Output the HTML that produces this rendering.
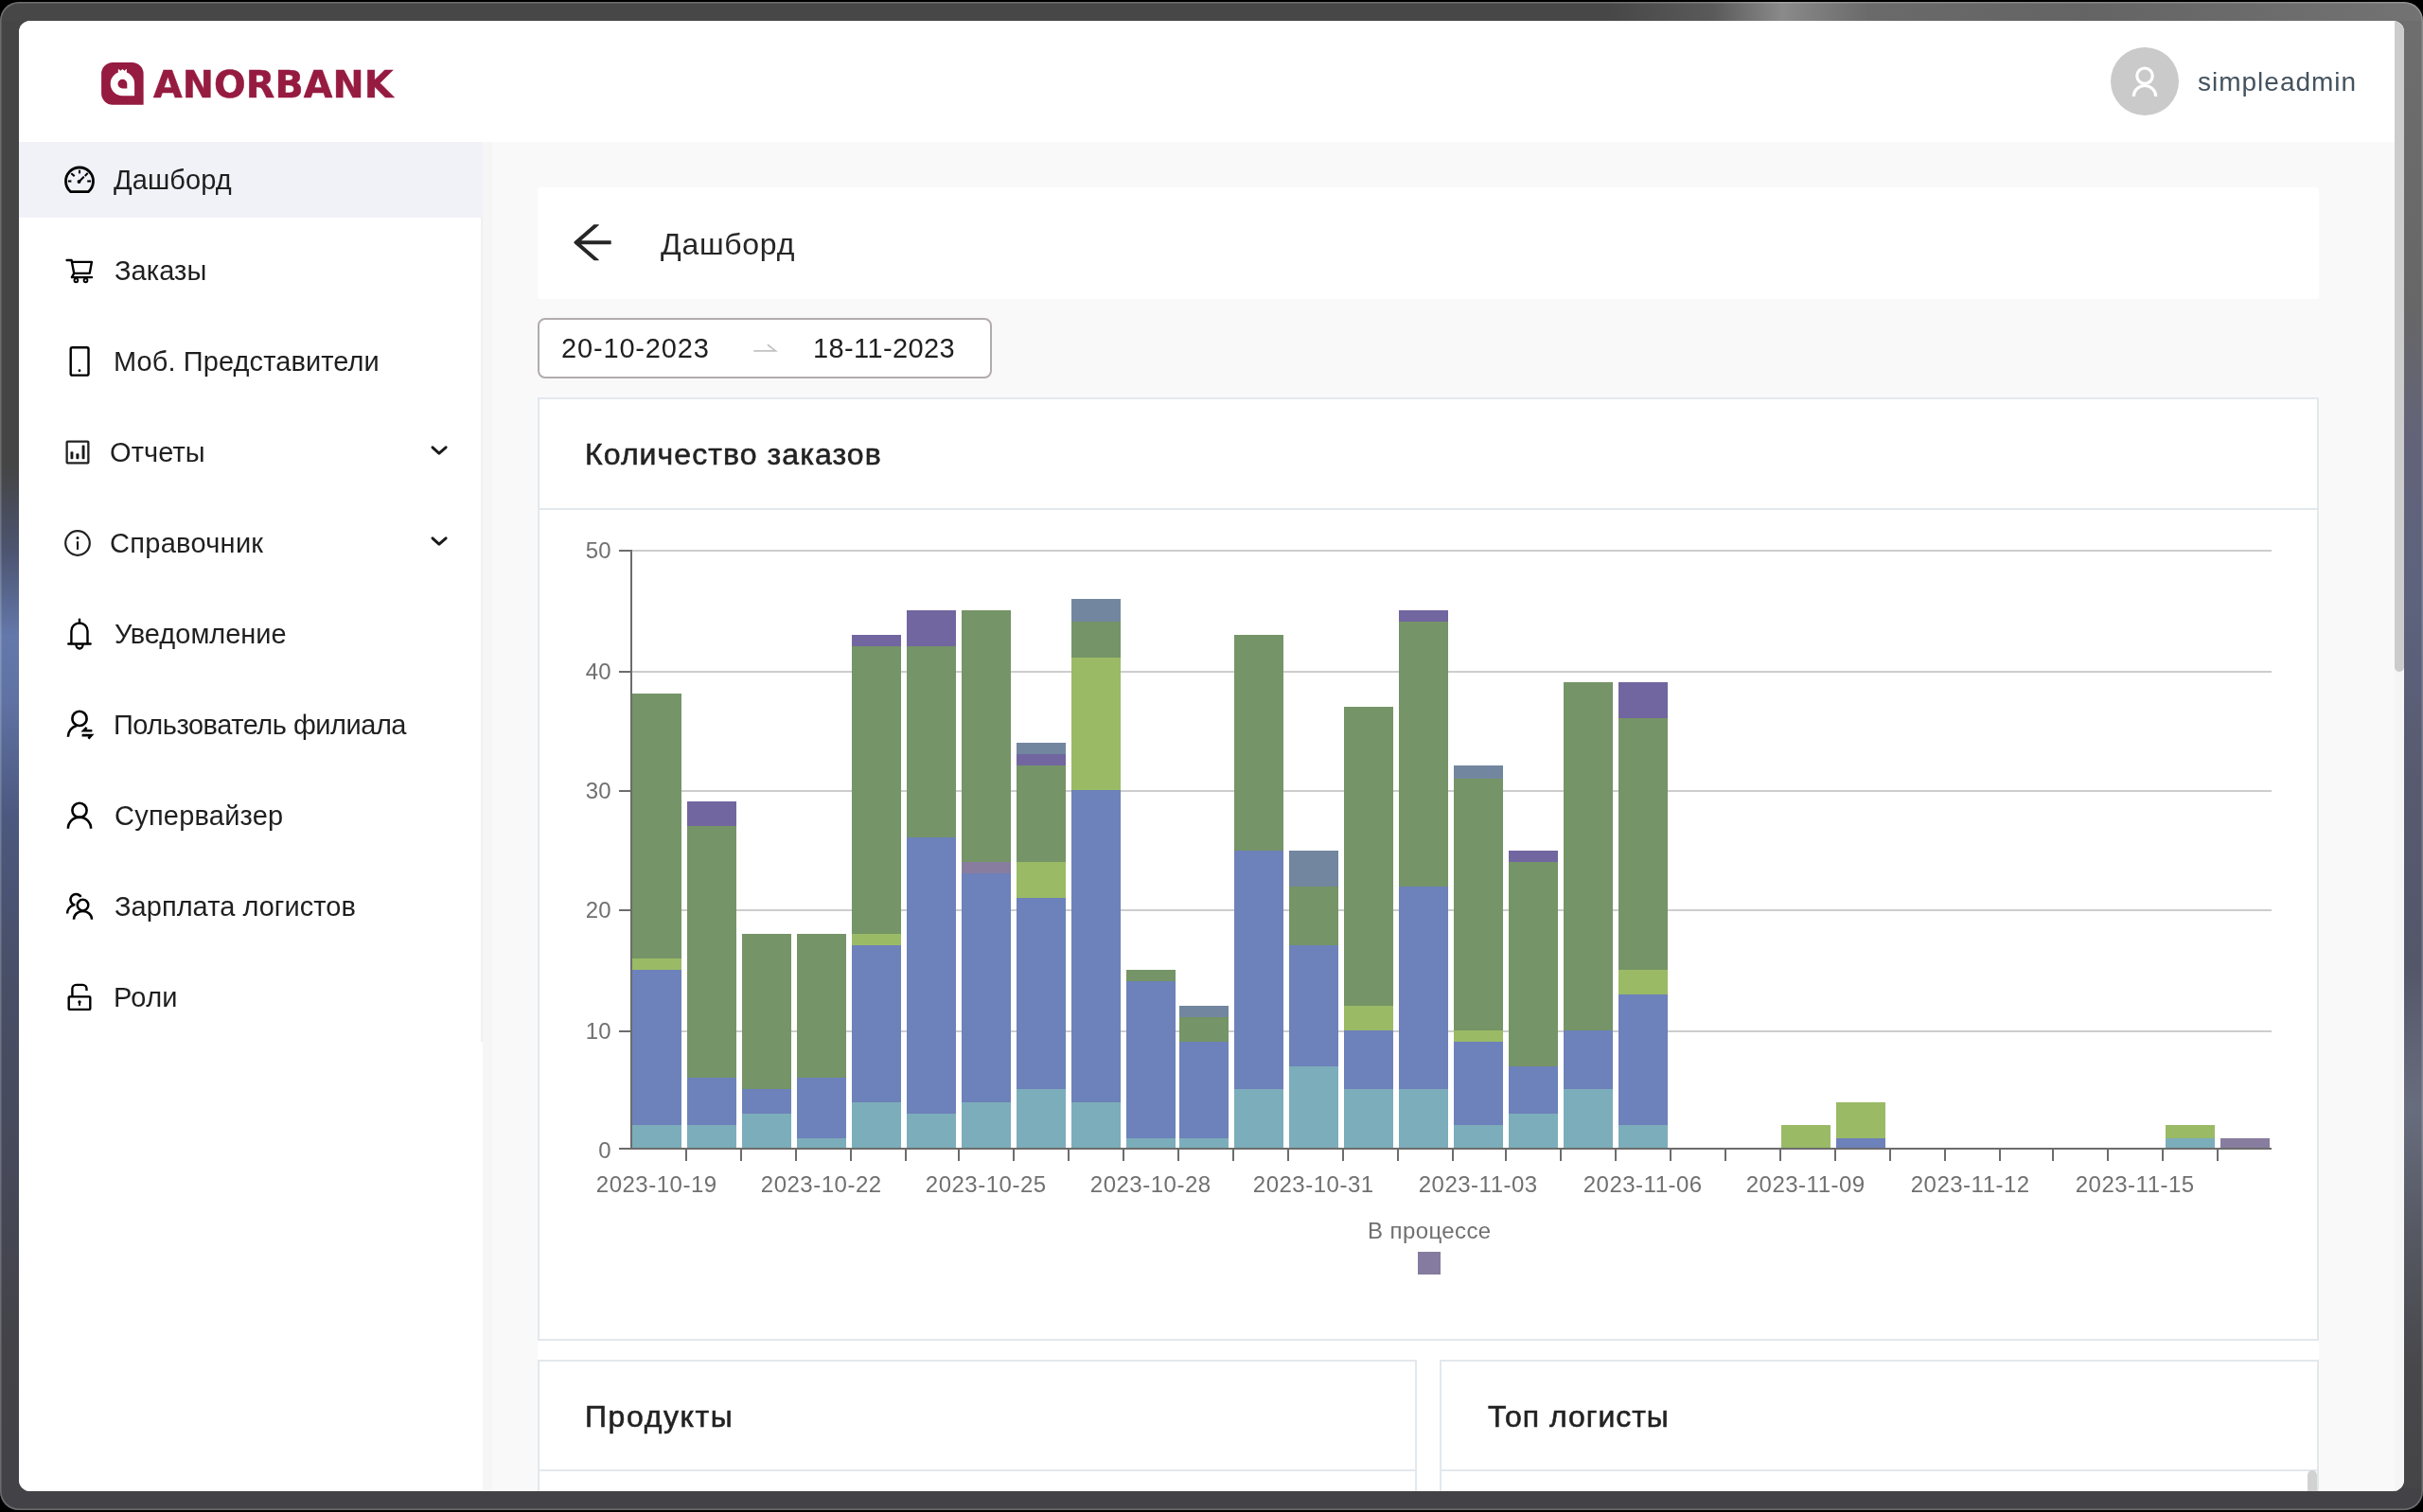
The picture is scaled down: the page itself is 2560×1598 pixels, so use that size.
<!DOCTYPE html>
<html lang="ru">
<head>
<meta charset="utf-8">
<title>Дашборд</title>
<style>
html,body{margin:0;padding:0;}
body{width:2560px;height:1598px;overflow:hidden;background:#000;position:relative;font-family:"Liberation Sans",sans-serif;}
.abs{position:absolute;}
.frame{position:absolute;left:0;top:2px;width:2560px;height:1594px;border-radius:20px;overflow:hidden;background:#454545;}
.frame .top{position:absolute;left:0;top:0;width:2560px;height:60px;background:linear-gradient(90deg,#474747 0,#474747 1700px,#5a5a5a 1810px,#8a8a8a 1883px,#6a6a6a 1975px,#646464 2200px,#6c6c6c 2400px,#737373 2560px);}
.frame .left{position:absolute;left:0;top:20px;width:40px;bottom:0;background:linear-gradient(180deg,#454545 0,#454545 470px,#4c5470 560px,#6478ab 650px,#5f72a3 720px,#4c587f 840px,#484f68 1000px,#46495a 1200px,#434348 1400px,#434347 1575px);}
.frame .right{position:absolute;right:0;top:20px;width:40px;bottom:0;background:linear-gradient(180deg,#6e6e6e 0,#676767 300px,#62637a 450px,#5d627d 620px,#585b70 800px,#54576a 1000px,#686d7e 1150px,#565963 1280px,#48484c 1420px,#444446 1575px);}
.frame .bottom{position:absolute;left:0;bottom:0;width:2560px;height:24px;background:#434347;}
.frame .edge{position:absolute;left:0;top:0;right:0;bottom:0;border-radius:20px;box-shadow:inset 0 0 0 1.5px rgba(255,255,255,.22);}
.win{position:absolute;left:20px;top:22px;width:2520px;height:1554px;border-radius:12px;overflow:hidden;background:#f9f9f9;}
.pg{position:absolute;left:-20px;top:-22px;width:2560px;height:1598px;}
.t{position:absolute;white-space:pre;will-change:transform;}
.card{position:absolute;background:#fff;border:2px solid #e3e8ed;box-sizing:border-box;}
.hl{position:absolute;height:2px;background:#e3e8ed;}
svg{position:absolute;overflow:visible;will-change:transform;}
svg text{font-family:"Liberation Sans",sans-serif;}
</style>
</head>
<body>
<div class="frame"><div class="top"></div><div class="left"></div><div class="right"></div><div class="bottom"></div><div class="edge"></div></div>
<div class="win"><div class="pg">

<!-- header -->
<div class="abs" style="left:20px;top:22px;width:2520px;height:128px;background:#fff;"></div>
<!-- sidebar -->
<div class="abs" style="left:20px;top:150px;width:490px;height:1426px;background:#fff;"></div>
<div class="abs" style="left:508px;top:150px;width:2px;height:951px;background:#f0f0f0;"></div>
<div class="abs" style="left:510px;top:150px;width:10px;height:1426px;background:#f6f6f6;border-radius:4px 4px 0 0;"></div>
<div class="abs" style="left:20px;top:150px;width:490px;height:80px;background:#f0f2f7;"></div>

<!-- main scrollbar -->
<div class="abs" style="left:2530px;top:22px;width:10px;height:1554px;background:#f5f5f5;"></div>
<div class="abs" style="left:2530px;top:22px;width:10px;height:688px;background:#cccccc;border-radius:0 0 5px 5px;"></div>

<!-- page header card -->
<div class="abs" style="left:568px;top:198px;width:1882px;height:118px;background:#fff;border-radius:4px;"></div>

<!-- date range picker -->
<div class="abs" style="left:568px;top:336px;width:480px;height:64px;box-sizing:border-box;border:2px solid #b2acac;border-radius:8px;background:#fff;"></div>

<!-- cards -->
<div class="abs" style="left:568px;top:420px;width:1882px;height:1200px;background:#fff;"></div>
<div class="card" style="left:568px;top:420px;width:1882px;height:997px;"></div>
<div class="hl" style="left:570px;top:537px;width:1878px;"></div>
<div class="card" style="left:568px;top:1437px;width:929px;height:200px;"></div>
<div class="hl" style="left:570px;top:1553px;width:925px;"></div>
<div class="card" style="left:1521px;top:1437px;width:929px;height:200px;"></div>
<div class="hl" style="left:1523px;top:1553px;width:925px;"></div>
<div class="abs" style="left:2438px;top:1554px;width:10px;height:40px;background:#d2d2d2;border-radius:5px;"></div>

<!-- ICONS -->
<svg width="2560" height="1598" viewBox="0 0 2560 1598" style="left:0;top:0;">
<!-- logo -->
<path d="M119.1,66.1H139.6A12,12 0 0 1 151.6,78.1V110.8H119.1A12,12 0 0 1 107.1,98.8V78.1A12,12 0 0 1 119.1,66.1Z" fill="#961b40"/>
<path d="M129.4,75.8A12.7,12.7 0 1 0 129.4,101.2H142.1V88.5A12.7,12.7 0 0 0 129.4,75.8Z" fill="#fff"/>
<path d="M124.9,72.7L127.4,74.8L129.4,73.1L131.4,74.8L133.8,72.8L133.9,78.5H124.8Z" fill="#fff"/>
<path d="M129.4,83.7A4.9,4.9 0 1 0 129.4,93.5H134.3V88.6A4.9,4.9 0 0 0 129.4,83.7Z" fill="#961b40"/>
<!-- avatar -->
<circle cx="2266" cy="86" r="36" fill="#cacaca"/>
<g fill="none" stroke="#fff" stroke-width="3.2">
<circle cx="2266" cy="80.2" r="8.2"/>
<path d="M2254.3,101.9A11.7,11.4 0 0 1 2277.7,101.9"/>
</g>
<!-- dashboard -->
<g fill="none" stroke="#000" stroke-width="2.8" stroke-linejoin="round">
<path d="M74.67,202.6A14.5,14.5 0 1 1 93.33,202.6Z"/>
</g>
<g fill="none" stroke="#000" stroke-width="2.1" stroke-linecap="butt">
<path d="M84,179.8V183.4"/><path d="M71.9,191.5H75.4"/><path d="M92.2,191.5H96.1"/>
<path d="M75.3,183.3L78.7,186.1"/><path d="M89.8,186.0L92.7,182.9"/>
<path d="M83.6,191.9L88.2,187.3" stroke-width="2.1" stroke-linecap="round"/>
</g>
<circle cx="83.5" cy="192" r="1.95" fill="#000"/>
<!-- cart -->
<g fill="none" stroke="#000" stroke-width="2.4" stroke-linecap="round" stroke-linejoin="round">
<path d="M70.6,275H75.6L78.2,288.9H94.7L96.9,276.9H76.2"/>
<path d="M78.2,288.9L75.9,293.1H97.1"/>
</g>
<g fill="none" stroke="#000" stroke-width="1.9"><circle cx="80.4" cy="296.3" r="1.9"/><circle cx="90.5" cy="296.3" r="1.9"/></g>
<!-- mobile -->
<rect x="74.7" y="367.3" width="18.8" height="29.3" rx="1.6" fill="none" stroke="#000" stroke-width="2.4"/>
<circle cx="84" cy="391.7" r="1.4" fill="#000"/>
<!-- reports -->
<rect x="70.65" y="466.65" width="22.7" height="22.7" rx="0.8" fill="none" stroke="#222" stroke-width="2.3"/>
<rect x="74.5" y="477.2" width="2.9" height="8.1" rx="1" fill="#1a1a1a"/>
<rect x="80.4" y="479.3" width="3" height="6" rx="1" fill="#1a1a1a"/>
<rect x="86.6" y="470.6" width="2.9" height="14.7" rx="1" fill="#1a1a1a"/>
<!-- info -->
<circle cx="82" cy="574" r="12.8" fill="none" stroke="#222" stroke-width="2.2"/>
<circle cx="82" cy="568.4" r="1.5" fill="#111"/>
<rect x="80.95" y="572.2" width="2.1" height="8.7" fill="#111"/>
<!-- bell -->
<g fill="none" stroke="#000" stroke-width="2.4" stroke-linecap="round">
<path d="M75.4,680V667A8.55,8.55 0 0 1 92.5,667V680"/>
<path d="M72.3,680.5H95.6"/>
<path d="M84,654.6V658"/>
<path d="M80.4,681.3A3.6,4.2 0 0 0 87.6,681.3" stroke-linecap="butt"/>
</g>
<!-- user switch -->
<g fill="none" stroke="#000" stroke-width="2.6">
<circle cx="84" cy="759.4" r="7.6"/>
<path d="M71.9,778.7A12.1,12.1 0 0 1 80.87,767.0"/>
<path d="M97.3,772.3H88.4L91.6,768.9" stroke-linejoin="miter"/>
<path d="M86.6,777.1H96.6L93.4,780.6" stroke-linejoin="miter"/>
</g>
<!-- user -->
<g fill="none" stroke="#000" stroke-width="2.6">
<circle cx="84" cy="856.4" r="7.6"/>
<path d="M71.9,875.7A12.1,12.1 0 0 1 96.1,875.7"/>
</g>
<!-- team -->
<g fill="none" stroke="#000" stroke-width="2.5">
<circle cx="87.5" cy="956.6" r="5.8"/>
<path d="M78,971.7A9.5,8.8 0 0 1 97,971.7"/>
<path d="M85.5,947.85A5.9,5.9 0 1 0 79.4,956.6"/>
<path d="M71.1,965.5A9.3,9.3 0 0 1 78.0,956.5"/>
</g>
<!-- unlock -->
<g fill="none" stroke="#000" stroke-width="2.4">
<rect x="72.7" y="1053.4" width="22.6" height="13.5" rx="0.8"/>
<path d="M76.4,1053V1045A4.1,4.1 0 0 1 80.5,1040.9H87.4A4.1,4.1 0 0 1 91.5,1045V1047"/>
</g>
<circle cx="84" cy="1058.9" r="1.7" fill="#000"/>
<rect x="83" y="1059" width="2" height="3.8" fill="#000"/>
<!-- chevrons -->
<g fill="none" stroke="#1a1a1a" stroke-width="3" stroke-linecap="round" stroke-linejoin="round">
<path d="M457,472.8L463.9,479.1L471.1,472.8"/>
<path d="M457,568.8L463.9,575.1L471.1,568.8"/>
</g>
<!-- back arrow -->
<g transform="translate(598.83,228.99) scale(0.05326)">
<path fill="#262626" d="M872 474H286.900l350.200-304c5.600-4.900 2.200-14-5.200-14h-88.500c-3.900 0-7.600 1.400-10.500 3.900L155 487.800a31.960 31.960 0 0 0 0 48.300L535.100 866c1.500 1.300 3.300 2 5.200 2h91.500c7.400 0 10.800-9.200 5.200-14L286.900 550H872c4.400 0 8-3.600 8-8v-60c0-4.400-3.600-8-8-8z"/>
</g>
<!-- range arrow -->
<path d="M796.3,370.8H819.4L810.9,364.3" fill="none" stroke="#c2c2c2" stroke-width="1.7" stroke-linejoin="miter"/>

</svg>

<!-- chart -->
<svg width="2560" height="1598" viewBox="0 0 2560 1598" style="left:0;top:0;" shape-rendering="crispEdges">
<rect x="668" y="1089" width="1732" height="2" fill="#cdcdcd"/>
<rect x="668" y="961" width="1732" height="2" fill="#cdcdcd"/>
<rect x="668" y="835" width="1732" height="2" fill="#cdcdcd"/>
<rect x="668" y="709" width="1732" height="2" fill="#cdcdcd"/>
<rect x="668" y="581" width="1732" height="2" fill="#cdcdcd"/>
<rect x="668" y="1189" width="52" height="24" fill="#7cadba"/>
<rect x="668" y="1025" width="52" height="164" fill="#6d81ba"/>
<rect x="668" y="1013" width="52" height="12" fill="#9aba66"/>
<rect x="668" y="733" width="52" height="280" fill="#759467"/>
<rect x="726" y="1189" width="52" height="24" fill="#7cadba"/>
<rect x="726" y="1139" width="52" height="50" fill="#6d81ba"/>
<rect x="726" y="873" width="52" height="266" fill="#759467"/>
<rect x="726" y="847" width="52" height="26" fill="#7266a0"/>
<rect x="784" y="1177" width="52" height="36" fill="#7cadba"/>
<rect x="784" y="1151" width="52" height="26" fill="#6d81ba"/>
<rect x="784" y="987" width="52" height="164" fill="#759467"/>
<rect x="842" y="1203" width="52" height="10" fill="#7cadba"/>
<rect x="842" y="1139" width="52" height="64" fill="#6d81ba"/>
<rect x="842" y="987" width="52" height="152" fill="#759467"/>
<rect x="900" y="1165" width="52" height="48" fill="#7cadba"/>
<rect x="900" y="999" width="52" height="166" fill="#6d81ba"/>
<rect x="900" y="987" width="52" height="12" fill="#9aba66"/>
<rect x="900" y="683" width="52" height="304" fill="#759467"/>
<rect x="900" y="671" width="52" height="12" fill="#7266a0"/>
<rect x="958" y="1177" width="52" height="36" fill="#7cadba"/>
<rect x="958" y="885" width="52" height="292" fill="#6d81ba"/>
<rect x="958" y="683" width="52" height="202" fill="#759467"/>
<rect x="958" y="645" width="52" height="38" fill="#7266a0"/>
<rect x="1016" y="1165" width="52" height="48" fill="#7cadba"/>
<rect x="1016" y="923" width="52" height="242" fill="#6d81ba"/>
<rect x="1016" y="911" width="52" height="12" fill="#887d9f"/>
<rect x="1016" y="645" width="52" height="266" fill="#759467"/>
<rect x="1074" y="1151" width="52" height="62" fill="#7cadba"/>
<rect x="1074" y="949" width="52" height="202" fill="#6d81ba"/>
<rect x="1074" y="911" width="52" height="38" fill="#9aba66"/>
<rect x="1074" y="809" width="52" height="102" fill="#759467"/>
<rect x="1074" y="797" width="52" height="12" fill="#7266a0"/>
<rect x="1074" y="785" width="52" height="12" fill="#72869f"/>
<rect x="1132" y="1165" width="52" height="48" fill="#7cadba"/>
<rect x="1132" y="835" width="52" height="330" fill="#6d81ba"/>
<rect x="1132" y="695" width="52" height="140" fill="#9aba66"/>
<rect x="1132" y="657" width="52" height="38" fill="#759467"/>
<rect x="1132" y="633" width="52" height="24" fill="#72869f"/>
<rect x="1190" y="1203" width="52" height="10" fill="#7cadba"/>
<rect x="1190" y="1037" width="52" height="166" fill="#6d81ba"/>
<rect x="1190" y="1025" width="52" height="12" fill="#759467"/>
<rect x="1246" y="1203" width="52" height="10" fill="#7cadba"/>
<rect x="1246" y="1101" width="52" height="102" fill="#6d81ba"/>
<rect x="1246" y="1075" width="52" height="26" fill="#759467"/>
<rect x="1246" y="1063" width="52" height="12" fill="#72869f"/>
<rect x="1304" y="1151" width="52" height="62" fill="#7cadba"/>
<rect x="1304" y="899" width="52" height="252" fill="#6d81ba"/>
<rect x="1304" y="671" width="52" height="228" fill="#759467"/>
<rect x="1362" y="1127" width="52" height="86" fill="#7cadba"/>
<rect x="1362" y="999" width="52" height="128" fill="#6d81ba"/>
<rect x="1362" y="937" width="52" height="62" fill="#759467"/>
<rect x="1362" y="899" width="52" height="38" fill="#72869f"/>
<rect x="1420" y="1151" width="52" height="62" fill="#7cadba"/>
<rect x="1420" y="1089" width="52" height="62" fill="#6d81ba"/>
<rect x="1420" y="1063" width="52" height="26" fill="#9aba66"/>
<rect x="1420" y="747" width="52" height="316" fill="#759467"/>
<rect x="1478" y="1151" width="52" height="62" fill="#7cadba"/>
<rect x="1478" y="937" width="52" height="214" fill="#6d81ba"/>
<rect x="1478" y="657" width="52" height="280" fill="#759467"/>
<rect x="1478" y="645" width="52" height="12" fill="#7266a0"/>
<rect x="1536" y="1189" width="52" height="24" fill="#7cadba"/>
<rect x="1536" y="1101" width="52" height="88" fill="#6d81ba"/>
<rect x="1536" y="1089" width="52" height="12" fill="#9aba66"/>
<rect x="1536" y="823" width="52" height="266" fill="#759467"/>
<rect x="1536" y="809" width="52" height="14" fill="#72869f"/>
<rect x="1594" y="1177" width="52" height="36" fill="#7cadba"/>
<rect x="1594" y="1127" width="52" height="50" fill="#6d81ba"/>
<rect x="1594" y="911" width="52" height="216" fill="#759467"/>
<rect x="1594" y="899" width="52" height="12" fill="#7266a0"/>
<rect x="1652" y="1151" width="52" height="62" fill="#7cadba"/>
<rect x="1652" y="1089" width="52" height="62" fill="#6d81ba"/>
<rect x="1652" y="721" width="52" height="368" fill="#759467"/>
<rect x="1710" y="1189" width="52" height="24" fill="#7cadba"/>
<rect x="1710" y="1051" width="52" height="138" fill="#6d81ba"/>
<rect x="1710" y="1025" width="52" height="26" fill="#9aba66"/>
<rect x="1710" y="759" width="52" height="266" fill="#759467"/>
<rect x="1710" y="721" width="52" height="38" fill="#7266a0"/>
<rect x="1882" y="1189" width="52" height="24" fill="#9aba66"/>
<rect x="1940" y="1203" width="52" height="10" fill="#6d81ba"/>
<rect x="1940" y="1165" width="52" height="38" fill="#9aba66"/>
<rect x="2288" y="1203" width="52" height="10" fill="#7cadba"/>
<rect x="2288" y="1189" width="52" height="14" fill="#9aba66"/>
<rect x="2346" y="1203" width="52" height="10" fill="#887d9f"/>
<rect x="666" y="581" width="2" height="634" fill="#6c6c6c"/>
<rect x="654" y="1213" width="13" height="2" fill="#6c6c6c"/>
<rect x="654" y="1089" width="13" height="2" fill="#6c6c6c"/>
<rect x="654" y="961" width="13" height="2" fill="#6c6c6c"/>
<rect x="654" y="835" width="13" height="2" fill="#6c6c6c"/>
<rect x="654" y="709" width="13" height="2" fill="#6c6c6c"/>
<rect x="654" y="581" width="13" height="2" fill="#6c6c6c"/>
<rect x="666" y="1213" width="1734" height="2" fill="#6c6c6c"/>
<rect x="724" y="1214" width="2" height="13" fill="#6c6c6c"/>
<rect x="782" y="1214" width="2" height="13" fill="#6c6c6c"/>
<rect x="840" y="1214" width="2" height="13" fill="#6c6c6c"/>
<rect x="898" y="1214" width="2" height="13" fill="#6c6c6c"/>
<rect x="956" y="1214" width="2" height="13" fill="#6c6c6c"/>
<rect x="1012" y="1214" width="2" height="13" fill="#6c6c6c"/>
<rect x="1070" y="1214" width="2" height="13" fill="#6c6c6c"/>
<rect x="1128" y="1214" width="2" height="13" fill="#6c6c6c"/>
<rect x="1186" y="1214" width="2" height="13" fill="#6c6c6c"/>
<rect x="1244" y="1214" width="2" height="13" fill="#6c6c6c"/>
<rect x="1302" y="1214" width="2" height="13" fill="#6c6c6c"/>
<rect x="1360" y="1214" width="2" height="13" fill="#6c6c6c"/>
<rect x="1418" y="1214" width="2" height="13" fill="#6c6c6c"/>
<rect x="1476" y="1214" width="2" height="13" fill="#6c6c6c"/>
<rect x="1534" y="1214" width="2" height="13" fill="#6c6c6c"/>
<rect x="1590" y="1214" width="2" height="13" fill="#6c6c6c"/>
<rect x="1648" y="1214" width="2" height="13" fill="#6c6c6c"/>
<rect x="1706" y="1214" width="2" height="13" fill="#6c6c6c"/>
<rect x="1764" y="1214" width="2" height="13" fill="#6c6c6c"/>
<rect x="1822" y="1214" width="2" height="13" fill="#6c6c6c"/>
<rect x="1880" y="1214" width="2" height="13" fill="#6c6c6c"/>
<rect x="1938" y="1214" width="2" height="13" fill="#6c6c6c"/>
<rect x="1996" y="1214" width="2" height="13" fill="#6c6c6c"/>
<rect x="2054" y="1214" width="2" height="13" fill="#6c6c6c"/>
<rect x="2112" y="1214" width="2" height="13" fill="#6c6c6c"/>
<rect x="2168" y="1214" width="2" height="13" fill="#6c6c6c"/>
<rect x="2226" y="1214" width="2" height="13" fill="#6c6c6c"/>
<rect x="2284" y="1214" width="2" height="13" fill="#6c6c6c"/>
<rect x="2342" y="1214" width="2" height="13" fill="#6c6c6c"/>
<text x="645.5" y="1223.6" text-anchor="end" font-size="24" fill="#707070">0</text>
<text x="645.5" y="1098.3" text-anchor="end" font-size="24" fill="#707070">10</text>
<text x="645.5" y="970.3" text-anchor="end" font-size="24" fill="#707070">20</text>
<text x="645.5" y="844.3" text-anchor="end" font-size="24" fill="#707070">30</text>
<text x="645.5" y="718.3" text-anchor="end" font-size="24" fill="#707070">40</text>
<text x="645.5" y="590.3" text-anchor="end" font-size="24" fill="#707070">50</text>
<text x="693.7" y="1259.8" text-anchor="middle" font-size="24" letter-spacing="0.5" fill="#707070">2023-10-19</text>
<text x="867.7" y="1259.8" text-anchor="middle" font-size="24" letter-spacing="0.5" fill="#707070">2023-10-22</text>
<text x="1041.7" y="1259.8" text-anchor="middle" font-size="24" letter-spacing="0.5" fill="#707070">2023-10-25</text>
<text x="1215.7" y="1259.8" text-anchor="middle" font-size="24" letter-spacing="0.5" fill="#707070">2023-10-28</text>
<text x="1387.7" y="1259.8" text-anchor="middle" font-size="24" letter-spacing="0.5" fill="#707070">2023-10-31</text>
<text x="1561.7" y="1259.8" text-anchor="middle" font-size="24" letter-spacing="0.5" fill="#707070">2023-11-03</text>
<text x="1735.7" y="1259.8" text-anchor="middle" font-size="24" letter-spacing="0.5" fill="#707070">2023-11-06</text>
<text x="1907.7" y="1259.8" text-anchor="middle" font-size="24" letter-spacing="0.5" fill="#707070">2023-11-09</text>
<text x="2081.7" y="1259.8" text-anchor="middle" font-size="24" letter-spacing="0.5" fill="#707070">2023-11-12</text>
<text x="2255.7" y="1259.8" text-anchor="middle" font-size="24" letter-spacing="0.5" fill="#707070">2023-11-15</text>
<text x="1510.3" y="1309" text-anchor="middle" font-size="24" letter-spacing="0.4" fill="#707070">В процессе</text>
<rect x="1498" y="1323" width="24" height="24" fill="#857a9f"/>
</svg>

<header>
<span class="t " style="left:161.50px;top:70px;font-size:39.6px;line-height:39.6px;letter-spacing:0.136px;color:#961b40;font-family:'DejaVu Sans',sans-serif;font-weight:700;-webkit-text-stroke:0.5px #961b40;">ANORBANK</span>
<span class="t " style="left:2321.90px;top:73px;font-size:28px;line-height:28px;letter-spacing:0.997px;color:#44535f;font-family:'Liberation Sans',sans-serif;font-weight:400;">simpleadmin</span>
</header>
<nav>
<span class="t " style="left:120.20px;top:176px;font-size:29px;line-height:29px;letter-spacing:0.079px;color:#1f1f1f;font-family:'Liberation Sans',sans-serif;font-weight:400;">Дашборд</span>
<span class="t " style="left:120.60px;top:272px;font-size:29px;line-height:29px;letter-spacing:0.065px;color:#1f1f1f;font-family:'Liberation Sans',sans-serif;font-weight:400;">Заказы</span>
<span class="t " style="left:119.60px;top:368px;font-size:29px;line-height:29px;letter-spacing:0.093px;color:#1f1f1f;font-family:'Liberation Sans',sans-serif;font-weight:400;">Моб. Представители</span>
<span class="t " style="left:115.70px;top:464px;font-size:29px;line-height:29px;letter-spacing:0.090px;color:#1f1f1f;font-family:'Liberation Sans',sans-serif;font-weight:400;">Отчеты</span>
<span class="t " style="left:115.70px;top:560px;font-size:29px;line-height:29px;letter-spacing:0.286px;color:#1f1f1f;font-family:'Liberation Sans',sans-serif;font-weight:400;">Справочник</span>
<span class="t " style="left:120.60px;top:656px;font-size:29px;line-height:29px;letter-spacing:-0.005px;color:#1f1f1f;font-family:'Liberation Sans',sans-serif;font-weight:400;">Уведомление</span>
<span class="t " style="left:119.60px;top:752px;font-size:29px;line-height:29px;letter-spacing:-0.482px;color:#1f1f1f;font-family:'Liberation Sans',sans-serif;font-weight:400;">Пользователь филиала</span>
<span class="t " style="left:120.60px;top:848px;font-size:29px;line-height:29px;letter-spacing:0.220px;color:#1f1f1f;font-family:'Liberation Sans',sans-serif;font-weight:400;">Супервайзер</span>
<span class="t " style="left:120.60px;top:944px;font-size:29px;line-height:29px;letter-spacing:0.042px;color:#1f1f1f;font-family:'Liberation Sans',sans-serif;font-weight:400;">Зарплата логистов</span>
<span class="t " style="left:119.60px;top:1040px;font-size:29px;line-height:29px;letter-spacing:0.292px;color:#1f1f1f;font-family:'Liberation Sans',sans-serif;font-weight:400;">Роли</span>
</nav>
<main>
<span class="t " style="left:697.70px;top:242px;font-size:32px;line-height:32px;letter-spacing:0.717px;color:#262626;font-family:'Liberation Sans',sans-serif;font-weight:400;">Дашборд</span>
<span class="t " style="left:592.70px;top:354px;font-size:29px;line-height:29px;letter-spacing:0.836px;color:#1f1f1f;font-family:'Liberation Sans',sans-serif;font-weight:400;">20-10-2023</span>
<span class="t " style="left:858.70px;top:354px;font-size:29px;line-height:29px;letter-spacing:0.383px;color:#1f1f1f;font-family:'Liberation Sans',sans-serif;font-weight:400;">18-11-2023</span>
<span class="t " style="left:617.80px;top:464px;font-size:32px;line-height:32px;letter-spacing:1.071px;color:#222;font-family:'Liberation Sans',sans-serif;font-weight:400;-webkit-text-stroke:0.55px #222;">Количество заказов</span>
<span class="t " style="left:618.00px;top:1481px;font-size:32px;line-height:32px;letter-spacing:1.611px;color:#222;font-family:'Liberation Sans',sans-serif;font-weight:400;-webkit-text-stroke:0.55px #222;">Продукты</span>
<span class="t " style="left:1571.90px;top:1481px;font-size:32px;line-height:32px;letter-spacing:0.977px;color:#222;font-family:'Liberation Sans',sans-serif;font-weight:400;-webkit-text-stroke:0.55px #222;">Топ логисты</span>
</main>

</div></div>
</body>
</html>
